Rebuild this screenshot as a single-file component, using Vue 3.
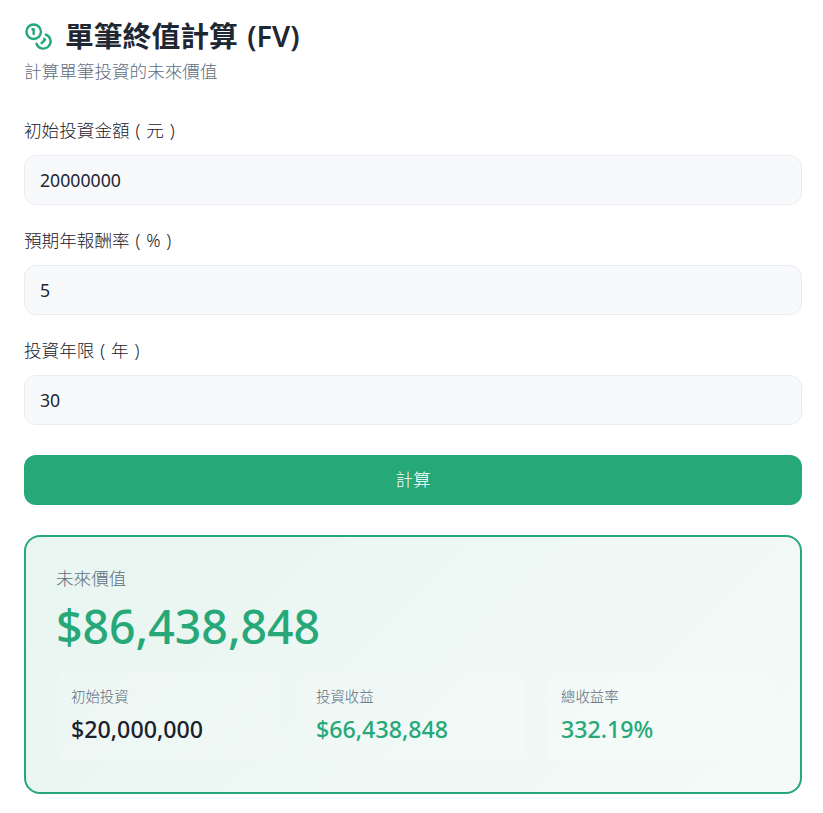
<script setup>
const fields = [
  { label: '初始投資金額 ( 元 )', value: '20000000' },
  { label: '預期年報酬率 ( % )', value: '5' },
  { label: '投資年限 ( 年 )', value: '30' },
]
const stats = [
  { label: '初始投資', value: '$20,000,000', tone: 'dark' },
  { label: '投資收益', value: '$66,438,848', tone: 'green' },
  { label: '總收益率', value: '332.19%', tone: 'green' },
]
</script>

<template>
  <main class="page">
    <header class="head">
      <h1 class="title">
        <svg class="icon" viewBox="0 0 24 24" fill="none" stroke="currentColor" stroke-width="2" stroke-linecap="round" stroke-linejoin="round">
          <circle cx="8" cy="8" r="6" />
          <path d="M18.09 10.37A6 6 0 1 1 10.34 18" />
          <path d="M7 6h1v4" />
          <path d="m16.71 13.88.7.71-2.82 2.82" />
        </svg>
        <span>單筆終值計算 (FV)</span>
      </h1>
      <p class="sub">計算單筆投資的未來價值</p>
    </header>

    <form class="form" @submit.prevent>
      <div v-for="f in fields" :key="f.label" class="field">
        <label class="label">{{ f.label }}</label>
        <input class="input" type="text" :value="f.value" />
      </div>
      <button class="btn" type="submit">計算</button>
    </form>

    <section class="result">
      <div class="r-label">未來價值</div>
      <div class="r-value">$86,438,848</div>
      <div class="stats">
        <div v-for="s in stats" :key="s.label" class="stat">
          <div class="s-label">{{ s.label }}</div>
          <div class="s-value" :class="s.tone">{{ s.value }}</div>
        </div>
      </div>
    </section>
  </main>
</template>

<style>
html, body { margin: 0; background: #fff; }
</style>

<style scoped>
.page {
  box-sizing: border-box;
  width: 823px;
  height: 813px;
  padding: 15px 21px 0 24px;
  font-family: "Noto Sans", "Noto Sans CJK TC", sans-serif;
  color: #1f2733;
}
.head { margin-bottom: 31px; }
.title {
  display: flex;
  align-items: center;
  gap: 12px;
  margin: 0;
  font-size: 28.8px;
  line-height: 42px;
  font-weight: 600;
  word-spacing: 2px;
  color: #1f2733;
}
.icon { width: 29px; height: 29px; color: #26a878; flex: none; margin-top: 1px; }
.sub {
  margin: 0;
  font-size: 17.6px;
  line-height: 28px;
  font-weight: 300;
  color: #5f6d80;
}
.form { display: flex; flex-direction: column; }
.field { display: flex; flex-direction: column; gap: 11px; margin-bottom: 21px; }
.label { font-size: 17.6px; line-height: 28px; font-weight: 300; word-spacing: 1.3px; color: #1a202c; }
.input {
  box-sizing: border-box;
  width: 100%;
  height: 50px;
  padding: 0 15px 1px;
  border: 1px solid #e9ebf1;
  border-radius: 12px;
  background: #f8f9fb;
  font: inherit;
  font-size: 17.7px;
  font-weight: 400;
  color: #1f2733;
  outline: none;
}
.btn {
  height: 50px;
  margin-top: 9px;
  padding: 0 0 3px;
  border: 0;
  border-radius: 12px;
  background: #26a878;
  color: #fff;
  font: inherit;
  font-size: 17.6px;
  font-weight: 300;
}
.result {
  box-sizing: border-box;
  margin-top: 30px;
  height: 259px;
  padding: 29px 30px 30px;
  border: 2px solid #26a878;
  border-radius: 16px;
  background: linear-gradient(135deg, #e8f5f0, #f4faf8);
}
.r-label { font-size: 17.6px; line-height: 24px; font-weight: 300; color: #5f6d80; }
.r-value {
  margin-top: 6px;
  font-size: 46.4px;
  line-height: 60px;
  font-weight: 500;
  color: #26a878;
}
.stats {
  display: grid;
  grid-template-columns: repeat(3, 1fr);
  gap: 21px;
  margin-top: 16px;
}
.stat {
  padding: 15px 15px 14px;
  height: 88px;
  box-sizing: border-box;
  border-radius: 12px;
  background: rgba(255, 255, 255, 0.15);
}
.s-label { font-size: 14.4px; line-height: 20px; font-weight: 300; color: #5f6d80; }
.s-value { margin-top: 6px; font-size: 23.2px; line-height: 32px; font-weight: 500; }
.s-value.dark { color: #1a202c; }
.s-value.green { color: #26a878; }
</style>
